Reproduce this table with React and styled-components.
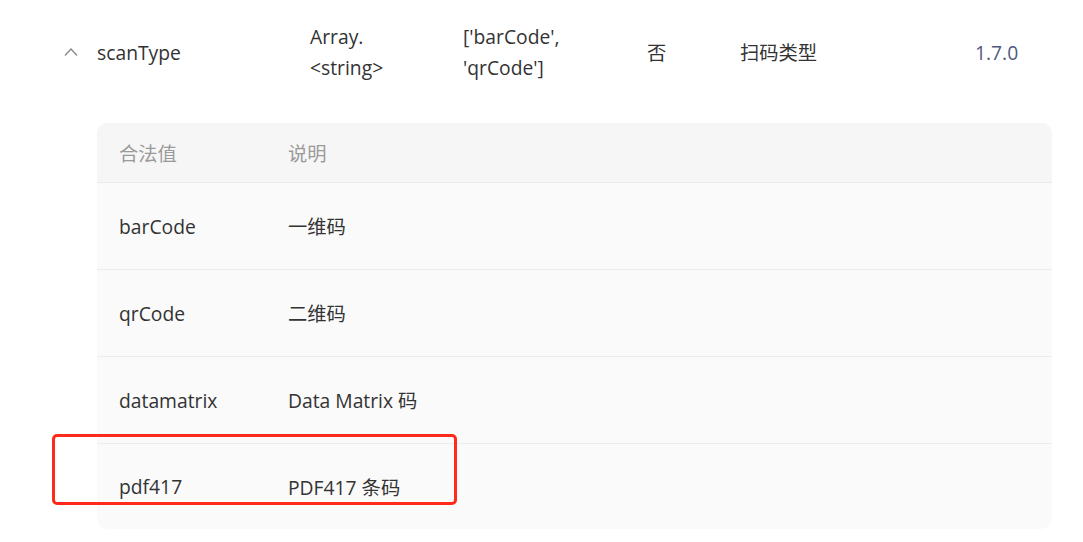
import React from "react";
import styled, { createGlobalStyle } from "styled-components";

const Global = createGlobalStyle`
  html, body { margin: 0; padding: 0; background: #fff; }
  body {
    font-family: "Open Sans", "Noto Sans CJK SC", sans-serif;
    color: #333;
    -webkit-font-smoothing: antialiased;
  }
`;

const Page = styled.div`
  position: relative;
  width: 1083px;
  height: 542px;
  padding: 21px 31px 0 52px;
  box-sizing: border-box;
  overflow: hidden;
`;

const PropRow = styled.div`
  display: flex;
  align-items: center;
  font-size: 19.3px;
  line-height: 31px;
  color: #333;
`;

const Cell = styled.div`
  width: ${(p) => p.$w}px;
  flex: ${(p) => (p.$w ? "none" : "1")};
  color: ${(p) => p.$color || "inherit"};
  white-space: nowrap;
`;

const ChevronCell = styled.div`
  width: 45px;
  flex: none;
  display: flex;
  align-items: center;
  padding-left: 12px;
  box-sizing: border-box;
`;

const Card = styled.div`
  margin: 40px 0 0 45px;
  background: #fafafa;
  border-radius: 10px;
  overflow: hidden;
`;

const HeadRow = styled.div`
  display: flex;
  align-items: center;
  height: 59px;
  padding-left: 22px;
  background: #f6f6f6;
  border-bottom: 1px solid #ebebeb;
  font-size: 19.3px;
  color: #9a9a9a;
`;

const Row = styled.div`
  display: flex;
  align-items: center;
  height: 86px;
  padding-left: 22px;
  border-bottom: 1px solid #ececec;
  font-size: 19.3px;
  color: #333;
  &:last-child { border-bottom: none; height: 85px; }
`;

const ValueCol = styled.div`
  width: 169px;
  flex: none;
`;

const DescCol = styled.div`
  flex: 1;
`;

const Highlight = styled.div`
  position: absolute;
  left: 52px;
  top: 434px;
  width: 405px;
  height: 71px;
  box-sizing: border-box;
  border: 3px solid #ff2a1c;
  border-radius: 5px;
  pointer-events: none;
`;

const values = [
  ["barCode", "一维码"],
  ["qrCode", "二维码"],
  ["datamatrix", "Data Matrix 码"],
  ["pdf417", "PDF417 条码"],
];

export default function App() {
  return (
    <>
      <Global />
      <Page>
        <PropRow>
          <ChevronCell>
            <svg width="14" height="10" viewBox="0 0 14 10">
              <polyline points="1,8.5 7,2 13,8.5" fill="none" stroke="#888" strokeWidth="1.3" />
            </svg>
          </ChevronCell>
          <Cell $w={213}>scanType</Cell>
          <Cell $w={153}>
            Array.
            <br />
            &lt;string&gt;
          </Cell>
          <Cell $w={184}>
            ['barCode',
            <br />
            'qrCode']
          </Cell>
          <Cell $w={93}>否</Cell>
          <Cell $w={235}>扫码类型</Cell>
          <Cell $color="#4f5a80">1.7.0</Cell>
        </PropRow>
        <Card>
          <HeadRow>
            <ValueCol>合法值</ValueCol>
            <DescCol>说明</DescCol>
          </HeadRow>
          {values.map(([v, d]) => (
            <Row key={v}>
              <ValueCol>{v}</ValueCol>
              <DescCol>{d}</DescCol>
            </Row>
          ))}
        </Card>
        <Highlight />
      </Page>
    </>
  );
}
